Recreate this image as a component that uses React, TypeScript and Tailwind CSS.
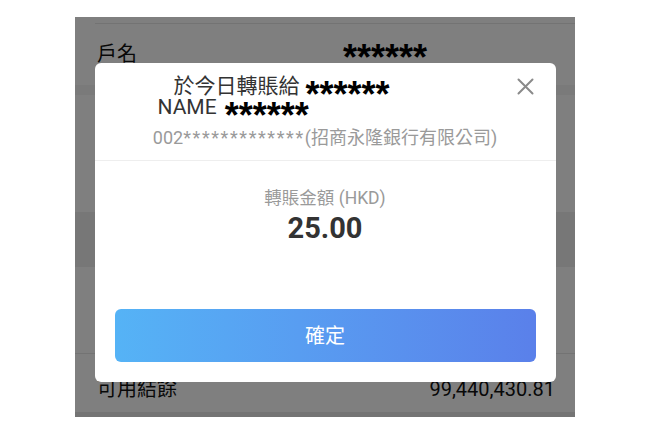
function Stars({ className = '' }: { className?: string }) {
  return (
    <span
      className={`font-[family-name:'Liberation_Sans',sans-serif] font-bold text-[36px] leading-[0] align-[-14px] text-black ${className}`}
    >
      ******
    </span>
  );
}

function CloseIcon() {
  return (
    <svg width="17" height="17" viewBox="0 0 17 17" fill="none" stroke="currentColor" strokeWidth="2" strokeLinecap="round">
      <path d="M1.5 1.5 L15.5 15.5 M15.5 1.5 L1.5 15.5" />
    </svg>
  );
}

function UnderPage() {
  return (
    <div className="flex flex-col w-full h-full bg-white text-[#111]">
      <div className="h-[6px]" />
      <div className="ml-5 h-px bg-[#e6e6e6]" />
      <div className="h-[61px] flex items-start pt-[16px] pl-[22px] text-[20px] leading-[28px]">
        <span className="w-[246px]">戶名</span>
        <span className="-mt-[5px]">
          <Stars />
        </span>
      </div>
      <div className="h-[10px] bg-[#f4f4f4]" />
      <div className="h-[117px]" />
      <div className="h-[55px] bg-[#eeeeee]" />
      <div className="h-[86px]" />
      <div className="h-px bg-[#e6e6e6]" />
      <div className="h-[58px] flex items-start justify-between pt-[21px] pl-[22px] pr-[20px] text-[20px] leading-[28px]">
        <span>可用結餘</span>
        <span>99,440,430.81</span>
      </div>
      <div className="h-[5px] bg-[#e8e8e8]" />
    </div>
  );
}

function ConfirmModal() {
  return (
    <div className="w-[461px] h-[319px] bg-white rounded-[6px] flex flex-col">
      <div className="flex flex-col pb-[10px] border-b border-[#eeeeee]">
        <div className="flex">
          <div className="flex-1 flex flex-col pt-[13px] text-[21px] leading-[21px] text-[#333]">
            <div className="pl-[79px] whitespace-nowrap">
              於今日轉賬給<Stars className="ml-[6px]" />
            </div>
            <div className="pl-[63px] whitespace-nowrap">
              NAME<Stars className="ml-[8px]" />
            </div>
          </div>
          <button className="mt-[15px] mr-[22px] self-start text-[#8a8a8a]">
            <CloseIcon />
          </button>
        </div>
        <div className="mt-[8px] text-center text-[18px] leading-[24px] text-[#9a9a9a] whitespace-nowrap">
          002<span className="tracking-[1.6px]">*************</span>(招商永隆銀行有限公司)
        </div>
      </div>
      <div className="mt-[25px] text-center text-[17.5px] leading-[24px] text-[#9a9a9a]">
        轉賬金額 (HKD)
      </div>
      <div className="mt-[2px] text-center text-[29px] leading-[32px] font-bold text-[#333]">
        25.00
      </div>
      <div className="mt-[65px] px-5">
        <button className="w-full h-[53px] rounded-[6px] bg-linear-to-r from-[#55b3f6] to-[#5a80ea] text-white text-[20px]">
          確定
        </button>
      </div>
    </div>
  );
}

export default function App() {
  return (
    <div className="w-[650px] h-[432px] bg-white flex items-start justify-center pt-[17px] font-[family-name:Roboto,'Noto_Sans_CJK_TC',sans-serif]">
      <div className="relative w-[500px] h-[400px] overflow-hidden">
        <UnderPage />
        <div className="absolute inset-0 bg-black/50 flex justify-center pt-[46px]">
          <ConfirmModal />
        </div>
      </div>
    </div>
  );
}
